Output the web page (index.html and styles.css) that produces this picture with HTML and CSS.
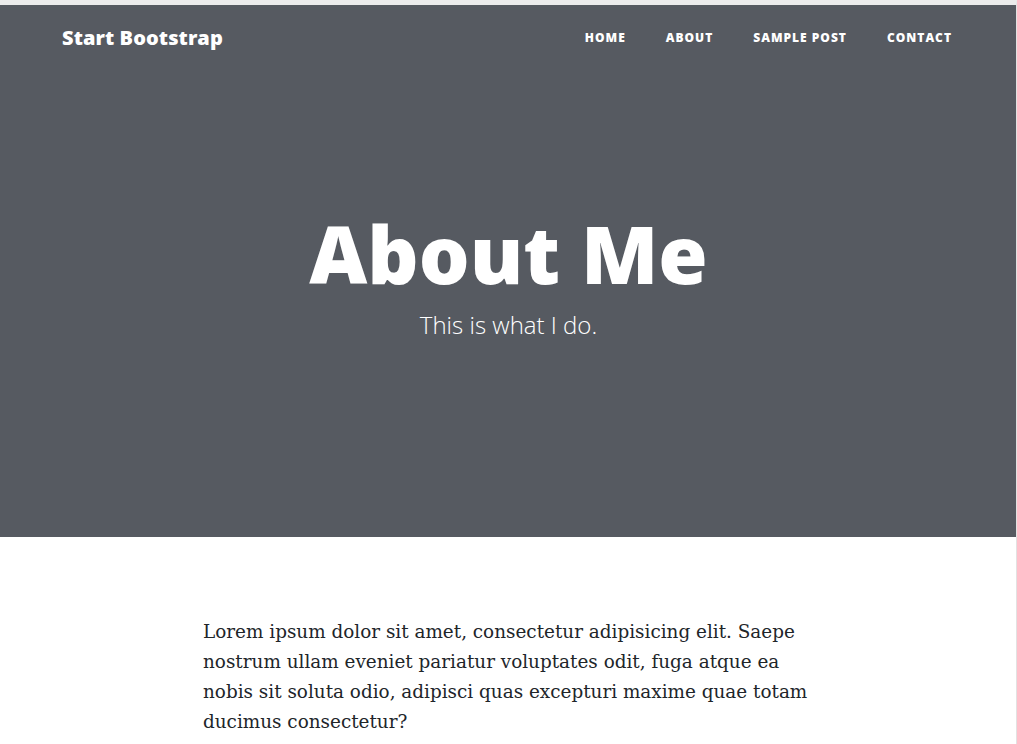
FILE: index.html
```html
<!DOCTYPE html>
<html lang="en">
<head>
  <meta charset="UTF-8">
  <meta name="viewport" content="width=device-width, initial-scale=1.0">
  <title>About Me - Clean Blog</title>
  <link rel="stylesheet" href="styles.css">
</head>
<body>
  <header class="masthead">
    <nav class="main-nav">
      <a class="brand" href="#">Start Bootstrap</a>
      <ul class="nav-links">
        <li><a href="#">Home</a></li>
        <li><a href="#">About</a></li>
        <li><a href="#">Sample Post</a></li>
        <li><a href="#">Contact</a></li>
      </ul>
    </nav>
    <div class="page-heading">
      <h1>About Me</h1>
      <span class="subheading">This is what I do.</span>
    </div>
  </header>

  <main class="content">
    <p>Lorem ipsum dolor sit amet, consectetur adipisicing elit. Saepe nostrum ullam eveniet pariatur voluptates odit, fuga atque ea nobis sit soluta odio, adipisci quas excepturi maxime quae totam ducimus consectetur?</p>
  </main>
</body>
</html>
```

FILE: styles.css
```css
html {
  background-color: #f0f0f0;
}
body {
  font-family: "DejaVu Serif", "Liberation Serif", serif;
  font-size: 18.4px;
  line-height: 30px;
  color: #212529;
  background-color: #fff;
  margin: 0;
  border-top: 5px solid #ececec;
  border-right: 1px solid #e2e2e2;
  min-height: 739px;
  box-sizing: border-box;
}
a {
  text-decoration: none;
}
.masthead {
  background-color: #565a61;
  color: #fff;
  font-family: "Open Sans", "Liberation Sans", sans-serif;
  height: 532px;
  margin-right: -1px;
}
.main-nav {
  display: flex;
  align-items: center;
  justify-content: space-between;
  height: 66px;
  padding: 0 45px 0 62px;
}
.brand {
  color: #fff;
  font-size: 20px;
  font-weight: 800;
  letter-spacing: 0.1px;
}
.nav-links {
  display: flex;
  list-style: none;
  margin: 0;
  padding: 0;
}
.nav-links a {
  display: block;
  padding: 10px 20px;
  color: #fff;
  font-size: 12px;
  font-weight: 800;
  letter-spacing: 1px;
  text-transform: uppercase;
}
.page-heading {
  display: flex;
  flex-direction: column;
  align-items: center;
  padding-top: 134px;
}
.page-heading h1 {
  margin: 0;
  font-size: 80px;
  font-weight: 800;
  line-height: 96px;
}
.subheading {
  margin-top: 11px;
  font-size: 24px;
  font-weight: 300;
  line-height: 26px;
}
.content {
  width: 610px;
  margin: 0 auto;
  padding: 80px 0 40px;
}
.content p {
  margin: 0;
}
```
